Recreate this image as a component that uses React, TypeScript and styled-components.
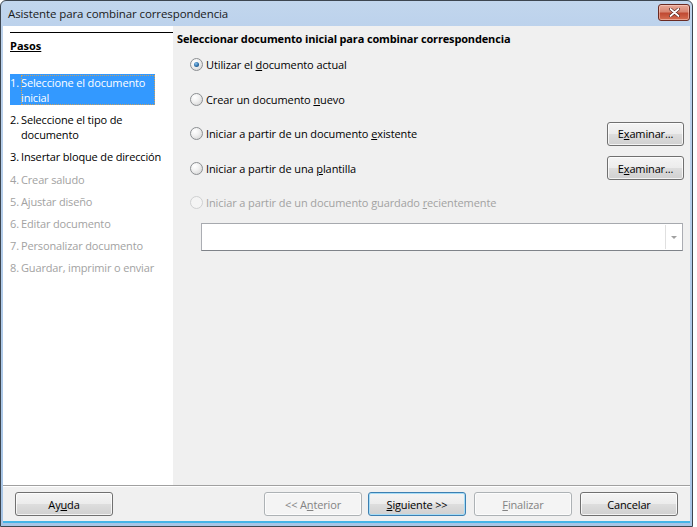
import React from 'react';
import styled, { createGlobalStyle, css } from 'styled-components';

const GlobalStyle = createGlobalStyle`
  html, body {
    margin: 0;
    padding: 0;
    background: #ffffff;
  }
  body {
    font-family: "Open Sans", "Liberation Sans", sans-serif;
    font-size: 11px;
    color: #000;
  }
`;

const Window = styled.div`
  width: 693px;
  height: 527px;
  box-sizing: border-box;
  border: 1px solid #3d4650;
  border-radius: 6px 6px 0 0;
  background: linear-gradient(to bottom, #c2d6ed 0px, #bcd2ec 26px, #a7c5e6 100%);
  display: flex;
  flex-direction: column;
  overflow: hidden;
`;

const TitleBar = styled.div`
  height: 25px;
  flex: none;
  display: flex;
  align-items: center;
  justify-content: space-between;
  padding: 0 2px 0 7px;
`;

const TitleText = styled.span`
  font-size: 11.5px;
  color: #1a1a1a;
  letter-spacing: -0.1px;
  margin-top: -1px;
`;

const CloseButton = styled.div`
  width: 30px;
  height: 15px;
  margin-top: -3px;
  border: 1px solid #6a2a22;
  border-radius: 3px;
  background: linear-gradient(to bottom, #e8a797 0%, #d88672 45%, #c04a33 55%, #d56f52 100%);
  display: flex;
  align-items: center;
  justify-content: center;
  box-shadow: inset 0 0 0 1px rgba(255, 220, 210, 0.5);
`;

const Client = styled.div`
  flex: 1;
  margin: 0 2px 3px 2px;
  display: flex;
  flex-direction: column;
  border-bottom: 2px solid #45b4e6;
`;

const Main = styled.div`
  flex: 1;
  display: flex;
`;

const Sidebar = styled.div`
  width: 170px;
  flex: none;
  background: #ffffff;
  padding: 6px 0 0 7px;
  box-sizing: border-box;
`;

const SidebarHeader = styled.div`
  border-top: 1px solid #000;
  padding-top: 5px;
  height: 36px;
  font-weight: 700;
  text-decoration: underline;
  line-height: 15px;
`;

const StepList = styled.div`
  display: flex;
  flex-direction: column;
  gap: 7.2px;
`;

const Step = styled.div<{ $state: 'selected' | 'enabled' | 'disabled' }>`
  display: flex;
  line-height: 15px;
  width: 158px;
  color: #000;
  letter-spacing: -0.15px;
  ${(p) =>
    p.$state === 'selected' &&
    css`
      width: 145px;
      background: #3399ff;
      color: #ffffff;
      padding: 0.5px 0;
    `}
  ${(p) =>
    p.$state === 'disabled' &&
    css`
      color: #a2a2a2;
    `}
`;

const StepNum = styled.span`
  width: 11px;
  flex: none;
`;

const StepLabel = styled.span<{ $focus?: boolean }>`
  flex: 1;
  ${(p) =>
    p.$focus &&
    css`
      outline: 1px dotted #c8a060;
      outline-offset: -1px;
    `}
`;

const Content = styled.div`
  flex: 1;
  background: #f0f0f0;
  padding: 5px 6px 0 4px;
  display: flex;
  flex-direction: column;
`;

const Heading = styled.div`
  font-weight: 700;
  line-height: 15px;
  letter-spacing: -0.15px;
  margin-bottom: 6px;
`;

const Options = styled.div`
  display: flex;
  flex-direction: column;
  gap: 9.5px;
  padding-left: 13px;
`;

const OptionRow = styled.div`
  height: 25px;
  display: flex;
  align-items: center;
  justify-content: space-between;
`;

const RadioLabel = styled.label<{ $disabled?: boolean }>`
  display: flex;
  align-items: center;
  gap: 3px;
  color: ${(p) => (p.$disabled ? '#a2a2a2' : '#000')};
  letter-spacing: -0.1px;
`;

const RadioCircle = styled.span<{ $checked?: boolean; $disabled?: boolean }>`
  width: 11px;
  height: 11px;
  border-radius: 50%;
  border: 1px solid ${(p) => (p.$disabled ? '#cfd0d1' : '#8c8f92')};
  background: ${(p) =>
    p.$disabled
      ? '#f4f4f4'
      : 'radial-gradient(circle at 35% 30%, #ffffff 0%, #f1f1f1 40%, #cfcfcf 100%)'};
  display: flex;
  align-items: center;
  justify-content: center;
  ${(p) =>
    p.$checked &&
    css`
      &::after {
        content: '';
        width: 5px;
        height: 5px;
        border-radius: 50%;
        background: radial-gradient(circle at 40% 35%, #8dc3ee 0%, #2c6fa8 55%, #163e66 100%);
      }
    `}
`;

const Button = styled.button<{ $default?: boolean; $width?: number }>`
  width: ${(p) => p.$width ?? 98}px;
  height: 24px;
  box-sizing: border-box;
  font-family: inherit;
  font-size: 11px;
  letter-spacing: -0.15px;
  color: #000;
  border: 1px solid ${(p) => (p.$default ? '#3c7fb1' : '#707070')};
  border-radius: 3px;
  background: linear-gradient(to bottom, #f4f4f4 0%, #ececec 48%, #dddddd 52%, #d0d0d0 100%);
  box-shadow: inset 0 0 0 1px ${(p) => (p.$default ? '#a6dcf6' : 'rgba(255,255,255,0.75)')};
  padding: 0;
  &:disabled {
    color: #838383;
    border-color: #adb2b5;
    background: #f4f4f4;
    box-shadow: inset 0 0 0 1px #fcfcfc;
  }
`;

const Combo = styled.div`
  margin: 8px 1px 0 24px;
  height: 28px;
  box-sizing: border-box;
  background: #ffffff;
  border: 1px solid #abadb3;
  border-bottom-color: #7f8389;
  border-top-color: #a6a9ae;
  display: flex;
  justify-content: flex-end;
  padding: 1px;
`;

const ComboArrow = styled.div`
  width: 15px;
  border-left: 1px solid #e0e0e0;
  display: flex;
  align-items: center;
  justify-content: center;
  &::after {
    content: '';
    border-left: 3px solid transparent;
    border-right: 3px solid transparent;
    border-top: 3px solid #a0a0a0;
  }
`;

const Footer = styled.div`
  height: 36px;
  flex: none;
  background: #f0f0f0;
  border-top: 1px solid #a0a0a0;
  box-shadow: inset 0 1px 0 #ffffff;
  display: flex;
  align-items: center;
  padding: 1px 0 0 12px;
  box-sizing: border-box;
`;

const FooterSpacer = styled.div`
  flex: 1;
`;

const FooterGroup = styled.div`
  display: flex;
  gap: 8px;
  margin-right: 12px;
  & > :first-child {
    margin-right: -2px;
  }
`;

const U = styled.span`
  text-decoration: underline;
`;

const steps: { n: string; label: string; state: 'selected' | 'enabled' | 'disabled' }[] = [
  { n: '1.', label: 'Seleccione el documento inicial', state: 'selected' },
  { n: '2.', label: 'Seleccione el tipo de documento', state: 'enabled' },
  { n: '3.', label: 'Insertar bloque de dirección', state: 'enabled' },
  { n: '4.', label: 'Crear saludo', state: 'disabled' },
  { n: '5.', label: 'Ajustar diseño', state: 'disabled' },
  { n: '6.', label: 'Editar documento', state: 'disabled' },
  { n: '7.', label: 'Personalizar documento', state: 'disabled' },
  { n: '8.', label: 'Guardar, imprimir o enviar', state: 'disabled' },
];

const App = () => (
  <>
    <GlobalStyle />
    <Window>
      <TitleBar>
        <TitleText>Asistente para combinar correspondencia</TitleText>
        <CloseButton>
          <svg width="11" height="9" viewBox="0 0 11 9">
            <path d="M1.5 1 L9.5 8 M9.5 1 L1.5 8" stroke="#4a1a14" strokeWidth="3" strokeLinecap="round" />
            <path d="M1.5 1 L9.5 8 M9.5 1 L1.5 8" stroke="#ffffff" strokeWidth="1.8" strokeLinecap="round" />
          </svg>
        </CloseButton>
      </TitleBar>
      <Client>
        <Main>
          <Sidebar>
            <SidebarHeader>Pasos</SidebarHeader>
            <StepList>
              {steps.map((s) => (
                <Step key={s.n} $state={s.state}>
                  <StepNum>{s.n}</StepNum>
                  <StepLabel $focus={s.state === 'selected'}>{s.label}</StepLabel>
                </Step>
              ))}
            </StepList>
          </Sidebar>
          <Content>
            <Heading>Seleccionar documento inicial para combinar correspondencia</Heading>
            <Options>
              <OptionRow>
                <RadioLabel>
                  <RadioCircle $checked />
                  <span>
                    Utilizar el <U>d</U>ocumento actual
                  </span>
                </RadioLabel>
              </OptionRow>
              <OptionRow>
                <RadioLabel>
                  <RadioCircle />
                  <span>
                    Crear un documento <U>n</U>uevo
                  </span>
                </RadioLabel>
              </OptionRow>
              <OptionRow>
                <RadioLabel>
                  <RadioCircle />
                  <span>
                    Iniciar a partir de un documento <U>e</U>xistente
                  </span>
                </RadioLabel>
                <Button $width={77}>
                  E<U>x</U>aminar...
                </Button>
              </OptionRow>
              <OptionRow>
                <RadioLabel>
                  <RadioCircle />
                  <span>
                    Iniciar a partir de una <U>p</U>lantilla
                  </span>
                </RadioLabel>
                <Button $width={77}>
                  E<U>x</U>aminar...
                </Button>
              </OptionRow>
              <OptionRow>
                <RadioLabel $disabled>
                  <RadioCircle $disabled />
                  <span>
                    Iniciar a partir de un documento guardado <U>r</U>ecientemente
                  </span>
                </RadioLabel>
              </OptionRow>
            </Options>
            <Combo>
              <ComboArrow />
            </Combo>
          </Content>
        </Main>
        <Footer>
          <Button $width={98}>
            Ay<U>u</U>da
          </Button>
          <FooterSpacer />
          <FooterGroup>
            <Button disabled>
              &lt;&lt; A<U>n</U>terior
            </Button>
            <Button $default>
              <U>S</U>iguiente &gt;&gt;
            </Button>
            <Button disabled>
              <U>F</U>inalizar
            </Button>
            <Button>Cancelar</Button>
          </FooterGroup>
        </Footer>
      </Client>
    </Window>
  </>
);

export default App;
